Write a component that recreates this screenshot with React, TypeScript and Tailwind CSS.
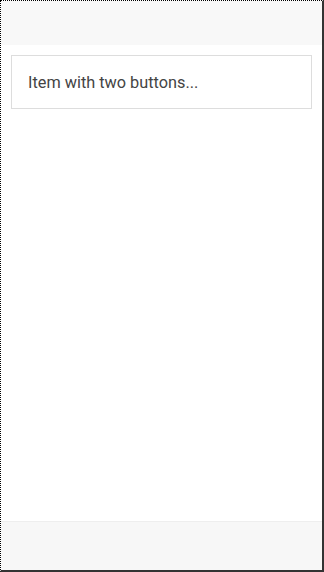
export default function App() {
  return (
    <div className="flex h-[572px] w-[324px] flex-col border-b-2 border-l border-r-2 border-t border-b-[#333] border-l-black border-r-[#333] border-t-black bg-white [border-style:dotted_solid_solid_dotted] [font-family:Roboto,'Noto_Sans',sans-serif]">
      <div className="h-[44px] shrink-0 bg-[#f8f8f8]" />
      <div className="flex-1 px-[10px] pt-[10px]">
        <div className="border border-[#ddd] bg-white px-4 pb-[15px] pt-[17px] text-[16.3px] leading-5 text-[#444]">
          Item with two buttons...
        </div>
      </div>
      <div className="h-[49px] shrink-0 border-t border-[#eee] bg-[#f7f7f7]" />
    </div>
  );
}
